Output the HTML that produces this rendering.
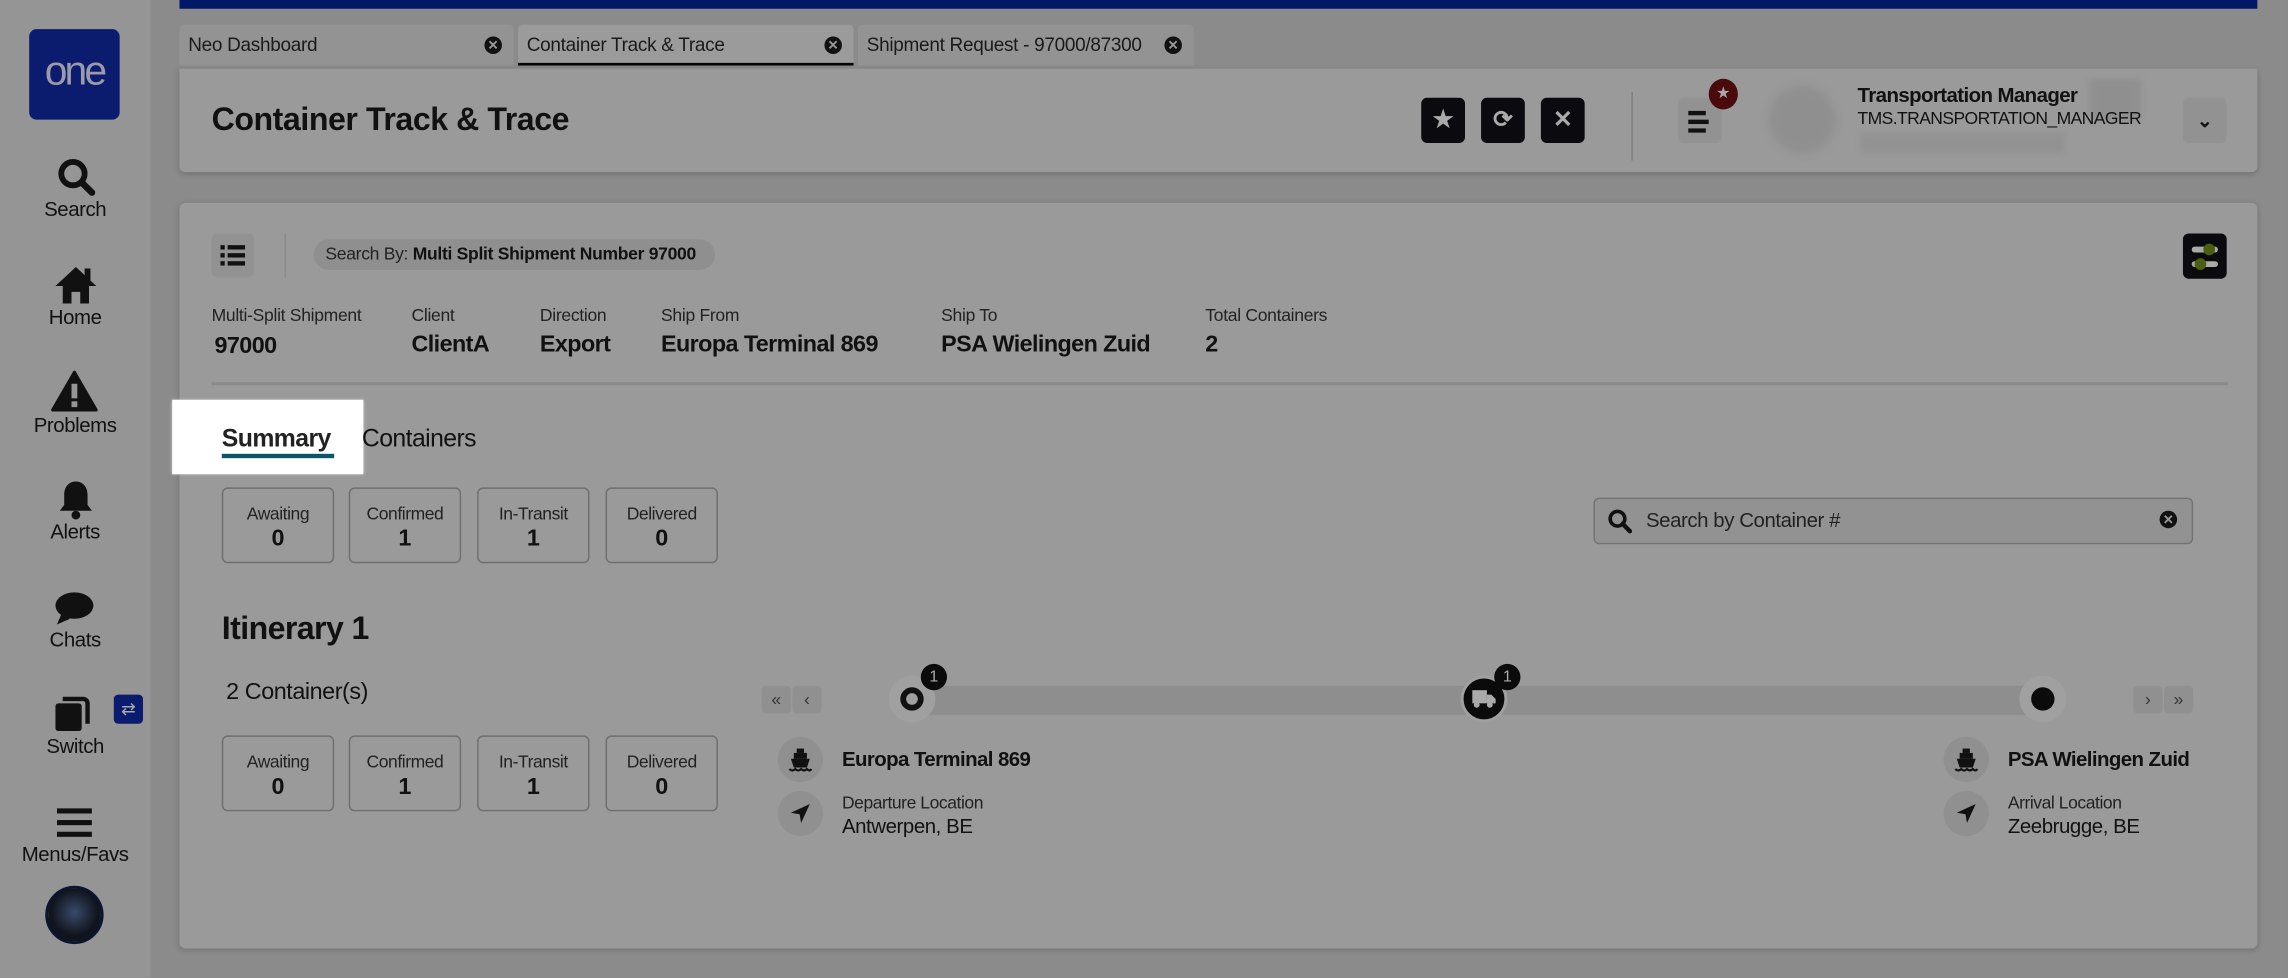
<!DOCTYPE html>
<html><head><meta charset="utf-8"><style>
*{box-sizing:border-box;margin:0;padding:0}
html,body{width:2288px;height:978px;overflow:hidden;background:#8b8b8b}
#w{position:absolute;left:0;top:0;width:1568px;height:670px;transform:scale(1.45918);transform-origin:0 0;font-family:"Liberation Sans",sans-serif;color:#111;background:#8b8b8b}
.a{position:absolute}
.side{left:0;top:0;width:103px;height:670px;background:#959595}
.nav{width:103px;text-align:center;font-size:14px;color:#111;letter-spacing:-0.3px}
.card{background:#9a9a9a;border-radius:4px;box-shadow:0 1px 4px rgba(0,0,0,.2)}
.tab{top:17px;height:28px;background:#939393;font-size:13px;color:#1a1a1a;padding:6px 6px;border-radius:3px 3px 0 0;letter-spacing:-0.2px}
.x{position:absolute;right:8px;top:8px;width:12px;height:12px;border-radius:50%;background:#111;color:#999;font-size:9px;line-height:12px;text-align:center;font-weight:bold;letter-spacing:0}
.bb{width:30px;height:31px;background:#0b0b0f;border-radius:4px;color:#aaa;text-align:center;line-height:31px;font-size:16px;font-weight:bold}
.gb{width:30px;height:31px;background:#929292;border-radius:4px}
.lbl{font-size:12px;color:#222;letter-spacing:-0.2px}
.val{font-size:16px;font-weight:bold;color:#111;letter-spacing:-0.4px}
.st{width:77px;height:52px;border:1px solid #6f6f6f;border-radius:4px;text-align:center}
.st .l{font-size:12px;color:#222;margin-top:10px;letter-spacing:-0.3px}
.st .v{font-size:16px;font-weight:bold;margin-top:2px}
.ic{width:31px;height:31px;border-radius:50%;background:#909090}
.bd{width:18px;height:18px;border-radius:50%;background:#0b0b0b;color:#aaa;font-size:11px;text-align:center;line-height:18px}
</style></head><body><div id="w">
<div class="a side"></div>
<div class="a" style="left:20px;top:20px;width:62px;height:62px;background:#0b1c6e;border-radius:5px;color:#9a9aaa;font-size:28px;text-align:center;line-height:58px;letter-spacing:-2px">one</div>
<svg class="a" style="left:38px;top:107px" width="28" height="28" viewBox="0 0 28 28"><circle cx="12" cy="12" r="8" fill="none" stroke="#111" stroke-width="4"/><path d="M18 18l7 7" stroke="#111" stroke-width="4.5" stroke-linecap="round"/></svg>
<div class="a nav" style="top:135px">Search</div>
<svg class="a" style="left:36px;top:181px" width="32" height="28" viewBox="0 0 32 28"><path d="M16 2L2 15h5v12h6v-8h6v8h6V15h5z" fill="#111"/><rect x="22" y="3" width="4" height="8" fill="#111"/></svg>
<div class="a nav" style="top:209px">Home</div>
<svg class="a" style="left:35px;top:254px" width="32" height="28" viewBox="0 0 32 28"><path d="M16 1L1 27h30z" fill="#111" stroke="#111" stroke-linejoin="round" stroke-width="2"/><rect x="14" y="9" width="4" height="10" fill="#959595"/><rect x="14" y="21" width="4" height="4" fill="#959595"/></svg>
<div class="a nav" style="top:283px">Problems</div>
<svg class="a" style="left:39px;top:328px" width="26" height="28" viewBox="0 0 26 28"><path d="M13 2c-5 0-8 4-8 9v7l-3 4h22l-3-4v-7c0-5-3-9-8-9z" fill="#111"/><circle cx="13" cy="25" r="3" fill="#111"/></svg>
<div class="a nav" style="top:356px">Alerts</div>
<svg class="a" style="left:37px;top:405px" width="28" height="24" viewBox="0 0 28 24"><ellipse cx="14" cy="10" rx="13" ry="9" fill="#111"/><path d="M5 16l-3 7 9-4z" fill="#111"/></svg>
<div class="a nav" style="top:430px">Chats</div>
<svg class="a" style="left:37px;top:474px" width="28" height="28" viewBox="0 0 28 28"><rect x="1" y="8" width="18" height="19" rx="2" fill="#111"/><path d="M6 5h14a3 3 0 013 3v14" stroke="#111" stroke-width="3" fill="none"/></svg>
<div class="a" style="left:78px;top:476px;width:20px;height:20px;background:#0b1c6e;border-radius:3px;color:#aaa;font-size:12px;text-align:center;line-height:20px">⇄</div>
<div class="a nav" style="top:503px">Switch</div>
<svg class="a" style="left:39px;top:553px" width="24" height="22" viewBox="0 0 24 22"><rect y="1" width="24" height="3.5" fill="#111"/><rect y="9" width="24" height="3.5" fill="#111"/><rect y="17" width="24" height="3.5" fill="#111"/></svg>
<div class="a nav" style="top:577px">Menus/Favs</div>
<div class="a" style="left:31px;top:607px;width:40px;height:40px;border-radius:50%;background:radial-gradient(circle at 50% 45%,#3a4a6a 0,#10141c 60%);border:2px solid #0c1530"></div>

<div class="a" style="left:123px;top:0;width:1424px;height:6px;background:#011866"></div>
<div class="a tab" style="left:123px;width:229px">Neo Dashboard<span class="x">✕</span></div>
<div class="a tab" style="left:355px;width:230px;background:#9b9b9b;border-bottom:2px solid #050505">Container Track &amp; Trace<span class="x">✕</span></div>
<div class="a tab" style="left:588px;width:230px">Shipment Request - 97000/87300<span class="x">✕</span></div>

<div class="a card" style="left:123px;top:47px;width:1424px;height:71px;border-radius:0 0 4px 4px"></div>
<div class="a" style="left:145px;top:69px;font-size:22px;font-weight:bold;letter-spacing:-0.3px">Container Track &amp; Trace</div>
<div class="a bb" style="left:974px;top:67px">★</div>
<div class="a bb" style="left:1015px;top:67px">⟳</div>
<div class="a bb" style="left:1056px;top:67px">✕</div>
<div class="a" style="left:1118px;top:63px;width:1px;height:47px;background:#7e7e7e"></div>
<div class="a gb" style="left:1150px;top:67px"></div>
<svg class="a" style="left:1156px;top:75px" width="16" height="16" viewBox="0 0 16 16"><rect x="1" y="1" width="12" height="3" fill="#111"/><rect x="1" y="7" width="14" height="3" fill="#111"/><rect x="1" y="13" width="12" height="3" fill="#111"/></svg>
<div class="a" style="left:1171px;top:54px;width:20px;height:21px;border-radius:50%;background:#4a0a0c;color:#aaa;font-size:11px;text-align:center;line-height:21px">★</div>
<div class="a" style="left:1212px;top:59px;width:46px;height:46px;border-radius:50%;background:#8f8f8f;filter:blur(3px)"></div>
<div class="a" style="left:1273px;top:57px;font-size:14px;font-weight:bold;letter-spacing:-0.4px">Transportation Manager</div>
<div class="a" style="left:1432px;top:54px;width:35px;height:28px;background:#8f8f8f;filter:blur(2px)"></div>
<div class="a" style="left:1273px;top:74px;font-size:12px;letter-spacing:-0.4px">TMS.TRANSPORTATION_MANAGER</div>
<div class="a" style="left:1275px;top:91px;width:140px;height:14px;background:#929292;filter:blur(2px)"></div>
<div class="a gb" style="left:1496px;top:67px;text-align:center;line-height:31px;font-size:13px;font-weight:bold">⌄</div>

<div class="a card" style="left:123px;top:139px;width:1424px;height:511px"></div>
<div class="a gb" style="left:145px;top:160px;width:29px;height:30px"></div>
<svg class="a" style="left:151px;top:167px" width="17" height="16" viewBox="0 0 17 16"><g fill="#111"><rect x="0" y="1" width="3" height="3"/><rect x="5" y="1" width="12" height="3"/><rect x="0" y="6.5" width="3" height="3"/><rect x="5" y="6.5" width="12" height="3"/><rect x="0" y="12" width="3" height="3"/><rect x="5" y="12" width="12" height="3"/></g></svg>
<div class="a" style="left:195px;top:160px;width:1px;height:30px;background:#8a8a8a"></div>
<div class="a" style="left:215px;top:164px;width:275px;height:21px;border-radius:11px;background:#8f8f8f;font-size:12px;line-height:21px;padding-left:8px;color:#222;white-space:nowrap;letter-spacing:-0.2px">Search By: <b style="color:#111">Multi Split Shipment Number 97000</b></div>
<div class="a bb" style="left:1496px;top:160px"></div>
<svg class="a" style="left:1500px;top:166px" width="22" height="20" viewBox="0 0 22 20"><rect x="2" y="3" width="18" height="4" rx="2" fill="#aaa"/><rect x="2" y="13" width="18" height="4" rx="2" fill="#aaa"/><circle cx="14" cy="5" r="4" fill="#4c5e10"/><circle cx="8" cy="15" r="4" fill="#4c5e10"/></svg>

<div class="a lbl" style="left:145px;top:209px">Multi-Split Shipment</div><div class="a val" style="left:147px;top:229px">97000</div>
<div class="a lbl" style="left:282px;top:209px">Client</div><div class="a val" style="left:282px;top:228px">ClientA</div>
<div class="a lbl" style="left:370px;top:209px">Direction</div><div class="a val" style="left:370px;top:228px">Export</div>
<div class="a lbl" style="left:453px;top:209px">Ship From</div><div class="a val" style="left:453px;top:228px">Europa Terminal 869</div>
<div class="a lbl" style="left:645px;top:209px">Ship To</div><div class="a val" style="left:645px;top:228px">PSA Wielingen Zuid</div>
<div class="a lbl" style="left:826px;top:209px">Total Containers</div><div class="a val" style="left:826px;top:228px">2</div>
<div class="a" style="left:145px;top:262px;width:1382px;height:2px;background:#8a8a8a"></div>

<div class="a" style="left:118px;top:274px;width:131px;height:51px;background:#fff;box-shadow:0 0 2px #ccc"></div>
<div class="a" style="left:152px;top:291px;font-size:17px;font-weight:bold;color:#222;letter-spacing:-0.4px">Summary</div>
<div class="a" style="left:152px;top:311px;width:77px;height:3px;background:#0b5566"></div>
<div class="a" style="left:248px;top:291px;font-size:17px;color:#111;letter-spacing:-0.4px">Containers</div>

<div class="a st" style="left:152px;top:334px"><div class="l">Awaiting</div><div class="v">0</div></div>
<div class="a st" style="left:239px;top:334px"><div class="l">Confirmed</div><div class="v">1</div></div>
<div class="a st" style="left:327px;top:334px"><div class="l">In-Transit</div><div class="v">1</div></div>
<div class="a st" style="left:415px;top:334px"><div class="l">Delivered</div><div class="v">0</div></div>

<div class="a" style="left:1092px;top:341px;width:411px;height:32px;border:1px solid #737373;border-radius:4px;background:#929292"></div>
<svg class="a" style="left:1101px;top:348px" width="18" height="18" viewBox="0 0 18 18"><circle cx="7.5" cy="7.5" r="5" fill="none" stroke="#111" stroke-width="2.5"/><path d="M11 11l5 5" stroke="#111" stroke-width="3" stroke-linecap="round"/></svg>
<div class="a" style="left:1128px;top:348px;font-size:14px;color:#222;letter-spacing:-0.3px">Search by Container #</div>
<div class="a x" style="left:1480px;top:350px;right:auto">✕</div>

<div class="a" style="left:152px;top:418px;font-size:22px;font-weight:bold;letter-spacing:-0.4px">Itinerary 1</div>
<div class="a" style="left:155px;top:466px;font-size:16px;letter-spacing:-0.3px">2 Container(s)</div>
<div class="a st" style="left:152px;top:504px"><div class="l">Awaiting</div><div class="v">0</div></div>
<div class="a st" style="left:239px;top:504px"><div class="l">Confirmed</div><div class="v">1</div></div>
<div class="a st" style="left:327px;top:504px"><div class="l">In-Transit</div><div class="v">1</div></div>
<div class="a st" style="left:415px;top:504px"><div class="l">Delivered</div><div class="v">0</div></div>

<div class="a" style="left:522px;top:470px;width:20px;height:19px;background:#909090;border-radius:3px;font-size:12px;text-align:center;line-height:19px;color:#333">«</div>
<div class="a" style="left:543px;top:470px;width:20px;height:19px;background:#909090;border-radius:3px;font-size:12px;text-align:center;line-height:19px;color:#333">‹</div>
<div class="a" style="left:1462px;top:470px;width:20px;height:19px;background:#909090;border-radius:3px;font-size:12px;text-align:center;line-height:19px;color:#333">›</div>
<div class="a" style="left:1483px;top:470px;width:20px;height:19px;background:#909090;border-radius:3px;font-size:12px;text-align:center;line-height:19px;color:#333">»</div>
<div class="a" style="left:625px;top:470px;width:775px;height:20px;background:#8e8e8e"></div>
<div class="a" style="left:609px;top:463px;width:32px;height:32px;border-radius:50%;background:#a0a0a0"></div>
<div class="a" style="left:617px;top:471px;width:16px;height:16px;border-radius:50%;border:4px solid #111;background:#a0a0a0"></div>
<div class="a bd" style="left:631px;top:455px">1</div>
<div class="a" style="left:1001px;top:463px;width:32px;height:32px;border-radius:50%;background:#0b0b0b;border:2px solid #a0a0a0"></div>
<svg class="a" style="left:1008px;top:472px" width="18" height="14" viewBox="0 0 18 14"><rect x="1" y="1" width="10" height="9" fill="#aaa"/><path d="M11 4h3l3 3v3h-6z" fill="#aaa"/><circle cx="4" cy="11" r="2" fill="#aaa"/><circle cx="13" cy="11" r="2" fill="#aaa"/></svg>
<div class="a bd" style="left:1024px;top:455px">1</div>
<div class="a" style="left:1384px;top:463px;width:32px;height:32px;border-radius:50%;background:#a0a0a0"></div>
<div class="a" style="left:1392px;top:471px;width:16px;height:16px;border-radius:50%;background:#0b0b0b"></div>

<div class="a ic" style="left:533px;top:505px"></div>
<div class="a ic" style="left:533px;top:542px"></div>
<div class="a ic" style="left:1332px;top:505px"></div>
<div class="a ic" style="left:1332px;top:542px"></div>
<svg class="a" style="left:540px;top:512px" width="17" height="17" viewBox="0 0 17 17"><rect x="6" y="1" width="5" height="3" fill="#111"/><rect x="4" y="4" width="9" height="4" fill="#111"/><path d="M2 8h13l-2 6H4z" fill="#111"/><path d="M1 15q2 2 4 0q2 2 4 0q2 2 4 0q2 2 3 0" stroke="#111" fill="none" stroke-width="1.5"/></svg>
<svg class="a" style="left:1339px;top:512px" width="17" height="17" viewBox="0 0 17 17"><rect x="6" y="1" width="5" height="3" fill="#111"/><rect x="4" y="4" width="9" height="4" fill="#111"/><path d="M2 8h13l-2 6H4z" fill="#111"/><path d="M1 15q2 2 4 0q2 2 4 0q2 2 4 0q2 2 3 0" stroke="#111" fill="none" stroke-width="1.5"/></svg>
<svg class="a" style="left:541px;top:550px" width="15" height="15" viewBox="0 0 15 15"><path d="M14 1L1 7l6 1 1 6z" fill="#111"/></svg>
<svg class="a" style="left:1340px;top:550px" width="15" height="15" viewBox="0 0 15 15"><path d="M14 1L1 7l6 1 1 6z" fill="#111"/></svg>
<div class="a" style="left:577px;top:512px;font-size:14px;font-weight:bold;letter-spacing:-0.4px">Europa Terminal 869</div>
<div class="a" style="left:577px;top:543px;font-size:12px;color:#222;letter-spacing:-0.3px">Departure Location</div>
<div class="a" style="left:577px;top:558px;font-size:14px;letter-spacing:-0.3px">Antwerpen, BE</div>
<div class="a" style="left:1376px;top:512px;font-size:14px;font-weight:bold;letter-spacing:-0.4px">PSA Wielingen Zuid</div>
<div class="a" style="left:1376px;top:543px;font-size:12px;color:#222;letter-spacing:-0.3px">Arrival Location</div>
<div class="a" style="left:1376px;top:558px;font-size:14px;letter-spacing:-0.3px">Zeebrugge, BE</div>
</div></body></html>
